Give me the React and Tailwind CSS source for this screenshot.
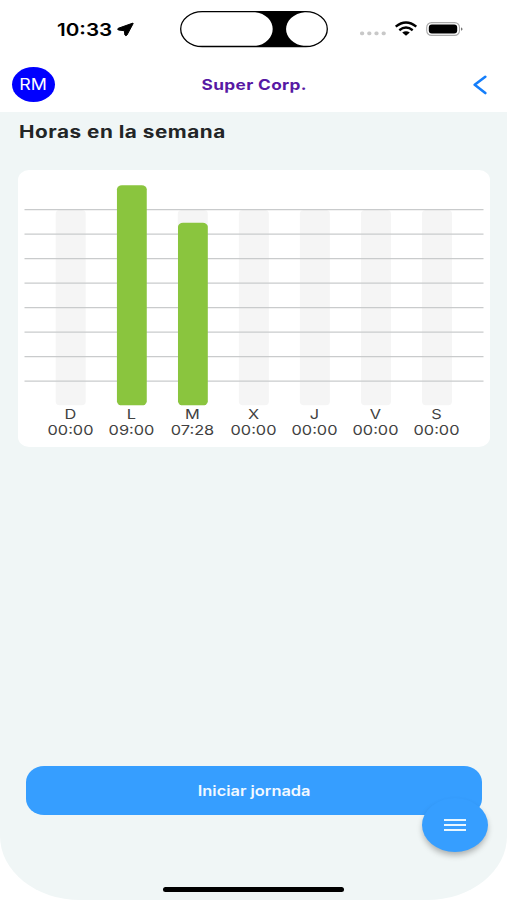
const days = [
  { day: 'D', time: '00:00', height: 0 },
  { day: 'L', time: '09:00', height: 220 },
  { day: 'M', time: '07:28', height: 182.5 },
  { day: 'X', time: '00:00', height: 0 },
  { day: 'J', time: '00:00', height: 0 },
  { day: 'V', time: '00:00', height: 0 },
  { day: 'S', time: '00:00', height: 0 },
];

const gridLines = [0, 1, 2, 3, 4, 5, 6, 7].map((n) => 39.6 + n * 24.5);

function StatusBar() {
  return (
    <div className="flex h-[59px] items-center text-black">
      <div className="ml-[57px] flex w-[123px] items-center">
        <span className="w-[60px] origin-left scale-x-[1.18] text-[17.5px] leading-none font-semibold whitespace-nowrap">10:33</span>
        <svg className="h-[15px] w-[17px]" viewBox="0 0 17 15" fill="currentColor" stroke="currentColor" strokeWidth="1" strokeLinejoin="round">
          <path d="M15.9 1.1 L1.2 6.3 Q.1 7.2 1.3 8 L7.3 8.7 L7.9 13 Q8.7 14.3 10 13 L16.2 1.5Z" />
        </svg>
      </div>
      <svg className="h-[37px] w-[148px]" viewBox="0 0 148 37">
        <rect x=".7" y=".7" width="146.6" height="34.8" rx="21.5" ry="17.4" fill="white" stroke="black" strokeWidth="1.3" />
        <path d="M74 .7 H126 C99.500 4 99.500 32 126 35.5 H74 C99 32 99 4 74 .7Z" fill="black" />
      </svg>
      <svg className="ml-[31px] h-[20px] w-[106px]" viewBox="0 0 106 20">
        <g fill="#c8c8c8">
          <rect x="1" y="11.6" width="4.2" height="3.6" rx="1.6" />
          <rect x="8.2" y="11.6" width="4.2" height="3.6" rx="1.6" />
          <rect x="15.4" y="11.6" width="4.2" height="3.6" rx="1.6" />
          <rect x="22.6" y="11.6" width="4.2" height="3.6" rx="1.6" />
        </g>
        <g fill="none" stroke="black" strokeWidth="2.4">
          <path d="M36.7 6.6 Q47 -1.6 57.3 6.6" />
          <path d="M40.3 10.2 Q47 5 53.7 10.2" />
        </g>
        <path d="M43.2 12.4 Q47 10.2 50.8 12.4 L47 15.8Z" />
        <rect x="67.7" y="2.6" width="32.8" height="12.8" rx="4.8" fill="none" stroke="#a9a9a9" strokeWidth="1.1" />
        <rect x="69.8" y="4.5" width="28.4" height="9.1" rx="3" />
        <path d="M102 7.2 Q105.2 9 102 10.8Z" fill="#777" />
      </svg>
    </div>
  );
}

function Header() {
  return (
    <header className="flex h-[53px] items-start pr-[19px] pl-[12px]">
      <div className="mt-[8px] flex h-[35px] w-[43px] items-center justify-center rounded-[50%] bg-[#0000ff]">
        <span className="mt-[1px] mr-[1px] scale-x-[1.15] text-[15.5px] leading-none text-white">RM</span>
      </div>
      <h1 className="mt-[18px] flex flex-1 justify-center pr-[20px] text-[14.5px] leading-[16px] font-bold whitespace-nowrap text-[#5719a4]">
        <span className="scale-x-[1.19] tracking-[0.3px]">Super Corp.</span>
      </h1>
      <svg className="mt-[16px] h-[20px] w-[15px]" viewBox="0 0 15 20" fill="none" stroke="#147efb" strokeWidth="2.6" strokeLinecap="round" strokeLinejoin="round">
        <path d="M12.3 1.8 L1.7 9.8 L12.3 18" />
      </svg>
    </header>
  );
}

function WeekChart() {
  return (
    <section className="mt-[27px] ml-[18px] h-[277px] w-[472px] rounded-[11px/10px] bg-white">
      <svg className="h-[236px] w-full" viewBox="0 0 472 236">
        {days.map((d, i) => (
          <rect key={i} x={37.7 + i * 61.05} y="40" width="30" height="195.3" rx="4" fill="#f5f5f5" />
        ))}
        {gridLines.map((y) => (
          <path key={y} d={`M6.5 ${y} H465.5`} stroke="#c9cbcc" strokeWidth="1.2" />
        ))}
        {days.map((d, i) => (
          d.height > 0 && <rect key={i} x={37.9 + i * 61.05} y={235.3 - d.height} width="29.8" height={d.height} rx="5" ry="4" fill="#8ac53e" />
        ))}
      </svg>
      <div className="ml-[22px] grid w-[427px] grid-cols-7 text-center text-[13.5px] leading-[16px] text-[#414141]">
        {days.map((d, i) => (
          <div key={i} className="scale-x-[1.21]">
            <div>{d.day}</div>
            <div>{d.time}</div>
          </div>
        ))}
      </div>
    </section>
  );
}

export default function App() {
  return (
    <div className="relative h-[900px] w-[507px] overflow-hidden bg-white font-['Inter','Liberation_Sans',sans-serif]">
      <StatusBar />
      <Header />
      <main className="flex h-[788px] flex-col rounded-b-[80px_64px] bg-[#f0f6f6]">
        <h2 className="mt-[10px] mb-px ml-[19px] w-[170px] origin-left scale-x-[1.22] text-[17px] leading-[20px] font-bold tracking-[0.42px] whitespace-nowrap text-[#222526]">Horas en la semana</h2>
        <div className="-mt-[27px] h-[27px]" />
        <WeekChart />
        <button className="mt-[319px] ml-[26px] flex h-[49px] w-[456px] shrink-0 items-center justify-center rounded-[18px/16px] bg-[#369eff] text-[14px] font-semibold text-[#f2f9ff]">
          <span className="scale-x-[1.17]">Iniciar jornada</span>
        </button>
        <div className="mx-auto mt-[72px] h-[5px] w-[181px] shrink-0 rounded-full bg-black" />
      </main>
      <button className="absolute top-[798px] left-[422px] flex h-[54px] w-[66px] items-center justify-center rounded-[50%] bg-[#369eff] shadow-[0_4px_6px_-1px_rgba(0,0,0,0.3)]">
        <svg className="h-[14px] w-[22px]" viewBox="0 0 22 14" stroke="#e8f7ff" strokeWidth="2.2">
          <path d="M0 2 H22 M0 7 H22 M0 12 H22" />
        </svg>
      </button>
    </div>
  );
}
